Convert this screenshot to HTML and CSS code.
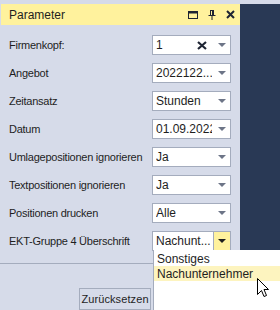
FILE: index.html
```html
<!DOCTYPE html>
<html lang="de">
<head>
    <meta charset="UTF-8">
    <title>Parameter</title>
    <link rel="stylesheet" href="styles.css">
</head>
<body>
    <div class="panel">
        <div class="titlebar">
            <span class="title">Parameter</span>
            <span class="tools">
                <svg width="10" height="8" viewBox="0 0 10 8"><rect x="0.5" y="0.5" width="9" height="7" fill="none" stroke="#1e2433"/><rect x="0" y="0" width="10" height="2.5" fill="#1e2433"/></svg>
                <svg width="8" height="10" viewBox="0 0 8 10"><path d="M2 0.5h4M2.5 0.5v5M5.5 0.5v5M0.5 5.5h7M4 5.5v4.5" fill="none" stroke="#1e2433"/><rect x="4" y="1" width="1.5" height="4.5" fill="#1e2433"/></svg>
                <svg width="9" height="9" viewBox="0 0 9 9"><path d="M1 1L8 8M8 1L1 8" stroke="#1e2433" stroke-width="2"/></svg>
            </span>
        </div>

        <div class="form">
            <div class="row">
                <label>Firmenkopf:</label>
                <div class="combo">
                    <span class="value">1</span>
                    <svg class="clear" width="10" height="9" viewBox="0 0 10 9"><path d="M1 1L9 8M9 1L1 8" stroke="#1e2433" stroke-width="2.2"/></svg>
                    <span class="arrow"></span>
                </div>
            </div>
            <div class="row">
                <label>Angebot</label>
                <div class="combo"><span class="value">2022122...</span><span class="arrow"></span></div>
            </div>
            <div class="row">
                <label>Zeitansatz</label>
                <div class="combo"><span class="value">Stunden</span><span class="arrow"></span></div>
            </div>
            <div class="row">
                <label>Datum</label>
                <div class="combo"><span class="value">01.09.2022</span><span class="arrow"></span></div>
            </div>
            <div class="row">
                <label>Umlagepositionen ignorieren</label>
                <div class="combo"><span class="value">Ja</span><span class="arrow"></span></div>
            </div>
            <div class="row">
                <label>Textpositionen ignorieren</label>
                <div class="combo"><span class="value">Ja</span><span class="arrow"></span></div>
            </div>
            <div class="row">
                <label>Positionen drucken</label>
                <div class="combo"><span class="value">Alle</span><span class="arrow"></span></div>
            </div>
            <div class="row">
                <label>EKT-Gruppe 4 &Uuml;berschrift</label>
                <div class="combo open"><span class="value">Nachunt...</span><span class="button"><span class="arrow dark"></span></span></div>
            </div>
        </div>

        <div class="footer">
            <button class="reset">Zur&uuml;cksetzen</button>
        </div>

        <!-- open dropdown of the last combo -->
        <div class="dropdown">
            <div class="item">Sonstiges</div>
            <div class="item hover">Nachunternehmer</div>
        </div>
    </div>
    <div class="side"></div>

    <svg class="cursor" width="12" height="19" viewBox="0 0 12 19">
        <path d="M0.5 0.5V16.5L4.5 12.5L7 18.5L9.5 17.5L7 11.5H11.5Z" fill="#fff" stroke="#000" stroke-linejoin="round"/>
    </svg>
</body>
</html>
```

FILE: styles.css
```css
body {
    margin: 0;
    padding-top: 4px;
    height: 306px;
    display: flex;
    background-color: #d6dbe9;
    font-family: "Liberation Sans", Arial, sans-serif;
    font-size: 11px;
    color: #1e1e1e;
    overflow: hidden;
}

.panel {
    position: relative;
    width: 240px;
    display: flex;
    flex-direction: column;
}

.side {
    flex: 1;
    background-color: #293955;
}

.titlebar {
    height: 21px;
    margin-left: 1px;
    background-color: #fff29d;
    display: flex;
    align-items: center;
    justify-content: space-between;
    padding: 0 5px 0 8px;
    font-size: 12px;
}

.tools {
    display: flex;
    align-items: center;
    gap: 10px;
}

.tools svg {
    display: block;
}

.form {
    display: flex;
    flex-direction: column;
    gap: 8px;
    padding: 10px 9px 0 9px;
}

.row {
    display: flex;
    align-items: center;
    justify-content: space-between;
    height: 20px;
}

.row label {
    white-space: nowrap;
    letter-spacing: -0.25px;
}

.combo {
    box-sizing: border-box;
    width: 79px;
    height: 20px;
    border: 1px solid #a4acbd;
    background-color: #fff;
    display: flex;
    align-items: center;
    padding-left: 3px;
}

.value {
    flex: 1;
    overflow: hidden;
    white-space: nowrap;
    font-size: 12px;
}

.clear {
    display: block;
    margin-right: 5px;
}

.arrow {
    width: 0;
    height: 0;
    border-left: 4px solid transparent;
    border-right: 4px solid transparent;
    border-top: 4px solid #6d7587;
    margin: 0 4px 0 6px;
}

.arrow.dark {
    border-top-color: #1e1e1e;
    margin: 0;
}

.button {
    width: 16px;
    height: 18px;
    border-left: 1px solid #a4acbd;
    background-color: #fff29d;
    display: flex;
    align-items: center;
    justify-content: center;
}

.footer {
    margin-top: 12px;
    border-top: 1px solid #a4acbd;
    padding: 24px 0 0 79px;
}

.reset {
    box-sizing: border-box;
    width: 72px;
    height: 22px;
    border: 1px solid #a4acbd;
    background-color: #d6dbe9;
    font-family: "Liberation Sans", Arial, sans-serif;
    font-size: 11px;
    letter-spacing: 0.1px;
    color: #1e1e1e;
    padding: 0;
}

.dropdown {
    position: absolute;
    left: 153px;
    top: 246px;
    width: 130px;
    height: 70px;
    background-color: #fff;
    border-left: 1px solid #a4acbd;
    padding-top: 1px;
    z-index: 2;
}

.item {
    height: 15px;
    line-height: 16px;
    padding-left: 3px;
    font-size: 12px;
    white-space: nowrap;
}

.item.hover {
    background-color: #fdf4bf;
}

.cursor {
    position: absolute;
    left: 257px;
    top: 278px;
    z-index: 3;
}
```
